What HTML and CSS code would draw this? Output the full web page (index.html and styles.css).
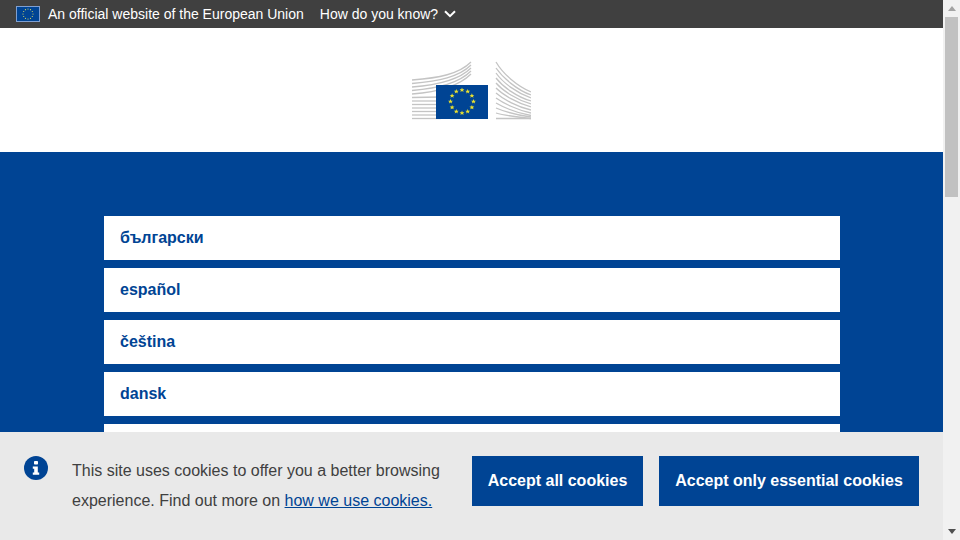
FILE: index.html
```html
<!DOCTYPE html>
<html lang="en">
<head>
    <meta charset="UTF-8">
    <meta name="viewport" content="width=device-width, initial-scale=1.0">
    <title>European Commission</title>
    <link rel="stylesheet" href="styles.css">
</head>
<body>
    <div class="page">
        <!-- Official EU site bar -->
        <div class="topbar">
            <svg class="topbar-flag" width="24" height="16" viewBox="0 0 24 16">
                <rect x="0.5" y="0.5" width="23" height="15" fill="#004494" stroke="#7f9fd0"/>
                <g fill="#d8d860">
                    <circle cx="12" cy="3" r="0.6"/><circle cx="14.5" cy="3.7" r="0.6"/><circle cx="16.3" cy="5.5" r="0.6"/>
                    <circle cx="17" cy="8" r="0.6"/><circle cx="16.3" cy="10.5" r="0.6"/><circle cx="14.5" cy="12.3" r="0.6"/>
                    <circle cx="12" cy="13" r="0.6"/><circle cx="9.5" cy="12.3" r="0.6"/><circle cx="7.7" cy="10.5" r="0.6"/>
                    <circle cx="7" cy="8" r="0.6"/><circle cx="7.7" cy="5.5" r="0.6"/><circle cx="9.5" cy="3.7" r="0.6"/>
                </g>
            </svg>
            <span class="topbar-text">An official website of the European Union</span>
            <span class="topbar-link">How do you know?</span>
            <svg class="topbar-chevron" width="12" height="8" viewBox="0 0 12 8">
                <path d="M1 1.2 L6 6.2 L11 1.2" fill="none" stroke="#fff" stroke-width="2"/>
            </svg>
        </div>

        <!-- Logo -->
        <div class="header">
            <svg class="logo" width="120" height="60" viewBox="0 0 120 60">
                <defs>
                    <polygon id="star" points="0,-2.4 0.7,-0.7 2.4,-0.7 1.1,0.4 1.6,2 0,1.1 -1.6,2 -1.1,0.4 -2.4,-0.7 -0.7,-0.7"/>
                </defs>
                <g fill="none" stroke="#c4c4c4" stroke-width="1.3">
                    <path d="M1 20 C28 18 48 14 60 2"/>
                    <path d="M1 23.5 C28 21 48 17 60 5"/>
                    <path d="M1 27 C28 25 48 20 60 8"/>
                    <path d="M1 30.5 C28 28 48 23 60 11"/>
                    <path d="M1 34 C28 32 48 26 60 14"/>
                    <path d="M1 37.5 L30 37"/>
                    <path d="M1 41 L30 41"/>
                    <path d="M1 44.5 L30 44.5"/>
                    <path d="M1 48 L30 48"/>
                    <path d="M1 51.5 L30 51.5"/>
                    <path d="M1 55 L30 55"/>
                    <path d="M1 58.5 L30 58.5"/>
                    <path d="M85 2 C92 14 106 26 120 32"/>
                    <path d="M85 8 C92 18 106 30 120 35"/>
                    <path d="M85 13 C92 23 106 33 120 38"/>
                    <path d="M85 18 C92 27 106 37 120 41"/>
                    <path d="M85 23 C92 31 106 40 120 44"/>
                    <path d="M85 28 C92 35 106 43 120 47"/>
                    <path d="M85 33 C92 39 106 47 120 50"/>
                    <path d="M85 38 C92 43 106 50 120 53"/>
                    <path d="M85 43 C92 47 106 53 120 55.5"/>
                    <path d="M85 48 C92 51 106 55 120 57"/>
                    <path d="M85 53 C92 55 106 57 120 58.5"/>
                    <path d="M85 58.5 L120 58.5"/>
                </g>
                <rect x="25" y="25" width="52" height="34" fill="#004494"/>
                <g fill="#e8e030">
                    <use href="#star" x="51" y="30"/><use href="#star" x="56.7" y="31.5"/><use href="#star" x="60.9" y="35.7"/>
                    <use href="#star" x="62.5" y="41.5"/><use href="#star" x="60.9" y="47.3"/><use href="#star" x="56.7" y="51.5"/>
                    <use href="#star" x="51" y="53"/><use href="#star" x="45.3" y="51.5"/><use href="#star" x="41.1" y="47.3"/>
                    <use href="#star" x="39.5" y="41.5"/><use href="#star" x="41.1" y="35.7"/><use href="#star" x="45.3" y="31.5"/>
                </g>
            </svg>
        </div>

        <!-- Language list -->
        <div class="languages">
            <a class="language" href="#">български</a>
            <a class="language" href="#">español</a>
            <a class="language" href="#">čeština</a>
            <a class="language" href="#">dansk</a>
            <a class="language" href="#"></a>
        </div>

        <!-- Cookie banner -->
        <div class="cookie">
            <svg class="cookie-icon" width="24" height="24" viewBox="0 0 24 24">
                <circle cx="12" cy="12" r="12" fill="#004494"/>
                <rect x="10" y="5" width="4" height="3.6" rx="0.8" fill="#fff"/>
                <path d="M8.8 10.4 H13.8 V16.4 H15.2 V18.8 H8.8 V16.4 H10.2 V12.8 H8.8 Z" fill="#fff"/>
            </svg>
            <p class="cookie-text">This site uses cookies to offer you a better browsing experience. Find out more on <a href="#">how we use cookies.</a></p>
            <div class="cookie-buttons">
                <button class="cookie-button cookie-button-all">Accept all cookies</button>
                <button class="cookie-button cookie-button-essential">Accept only essential cookies</button>
            </div>
        </div>
    </div>

    <!-- Scrollbar -->
    <div class="scrollbar">
        <div class="arrow-up"></div>
        <div class="scroll-track"><div class="scroll-thumb"></div></div>
        <div class="arrow-down"></div>
    </div>
</body>
</html>
```

FILE: styles.css
```css
/* General body styling */
body {
    font-family: 'Liberation Sans', Arial, sans-serif;
    margin: 0;
    padding: 0;
    height: 540px;
    overflow: hidden;
    display: flex;
    background: #ffffff;
    color: #404040;
}

.page {
    position: relative;
    flex: 1;
    min-width: 0;
    height: 540px;
    overflow: hidden;
}

/* Top bar */
.topbar {
    background-color: #404040;
    color: #ffffff;
    height: 28px;
    padding: 0 16px;
    display: flex;
    align-items: center;
    font-size: 14px;
}

.topbar-flag {
    margin-right: 8px;
}

.topbar-text {
    margin-right: 16px;
}

.topbar-chevron {
    margin-left: 6px;
}

/* Logo */
.header {
    height: 124px;
    display: flex;
    justify-content: center;
    align-items: flex-start;
    background: #ffffff;
}

.logo {
    margin-top: 32px;
    margin-right: 1px;
}

/* Language list */
.languages {
    background: #004494;
    padding: 64px 103px 64px 104px;
    display: flex;
    flex-direction: column;
    gap: 8px;
}

.language {
    display: flex;
    align-items: center;
    height: 44px;
    padding: 0 16px;
    background: #ffffff;
    color: #004494;
    font-size: 16px;
    font-weight: bold;
    text-decoration: none;
}

/* Cookie banner */
.cookie {
    position: absolute;
    left: 0;
    right: 0;
    bottom: 0;
    height: 108px;
    box-sizing: border-box;
    padding: 24px;
    display: flex;
    align-items: flex-start;
    background: #e9e9e9;
}

.cookie-icon {
    flex: none;
    margin-right: 24px;
}

.cookie-text {
    margin: 0 32px 0 0;
    width: 368px;
    flex: none;
    font-size: 16px;
    line-height: 30px;
    color: #404040;
}

.cookie-text a {
    color: #004494;
}

.cookie-buttons {
    display: flex;
    gap: 16px;
}

.cookie-button {
    height: 50px;
    padding: 0;
    border: none;
    background: #004494;
    color: #ffffff;
    font-family: inherit;
    font-size: 16px;
    font-weight: bold;
    white-space: nowrap;
    cursor: pointer;
}

.cookie-button-all {
    width: 171px;
}

.cookie-button-essential {
    width: 260px;
}

/* Scrollbar */
.scrollbar {
    flex: none;
    width: 17px;
    height: 540px;
    display: flex;
    flex-direction: column;
    align-items: center;
    background: #f1f1f1;
}

.arrow-up {
    width: 0;
    height: 0;
    margin: 6px 0 6px;
    border-left: 4px solid transparent;
    border-right: 4px solid transparent;
    border-bottom: 5px solid #a3a3a3;
}

.scroll-track {
    flex: 1;
    width: 100%;
}

.scroll-thumb {
    width: 13px;
    height: 180px;
    margin: 0 auto;
    background: #c1c1c1;
}

.arrow-down {
    width: 0;
    height: 0;
    margin: 6px 0 6px;
    border-left: 4px solid transparent;
    border-right: 4px solid transparent;
    border-top: 5px solid #505050;
}
```
